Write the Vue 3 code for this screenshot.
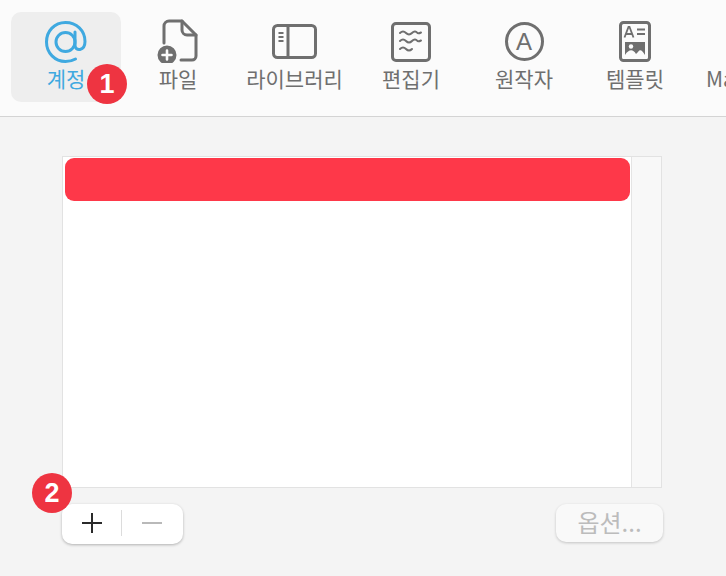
<template>
  <div class="prefs">
    <div class="toolbar">
      <div class="tab tab--active">
        <svg class="tab-icon" viewBox="0 0 60 44" fill="none" stroke="#3fa9e0" stroke-width="3" stroke-linecap="round">
          <circle cx="29.5" cy="23" r="9.500" />
          <path d="M39 13v13c0 7 10 6 10-3.500C49 11.500 40.500 3.500 29.500 3.500S10.500 12 10.500 23 19 42.500 29.500 42.500c4 0 7-.8 10-2.500" />
        </svg>
        <span class="tab-label">계정</span>
      </div>
      <div class="tab">
        <svg class="tab-icon" viewBox="0 0 60 44" fill="none" stroke="#6f6f6f" stroke-width="3" stroke-linejoin="round" stroke-linecap="round">
          <path d="M16 24V7a5 5 0 0 1 5-5h13l14 14v21a4 4 0 0 1-4 4H33" />
          <path d="M34 2v9a5 5 0 0 0 5 5h9" />
          <circle cx="19" cy="36" r="8" fill="#6f6f6f" stroke="#6f6f6f" />
          <path d="M14.500 36h9M19 31.500v9" stroke="#fbfbfb" stroke-width="2.600" />
        </svg>
        <span class="tab-label">파일</span>
      </div>
      <div class="tab">
        <svg class="tab-icon" viewBox="0 0 60 44" fill="none" stroke="#6f6f6f" stroke-width="3">
          <rect x="8.500" y="6.500" width="42" height="32" rx="4" />
          <path d="M23 6.500v32" />
          <path d="M13.500 14h5M13.500 18h5M13.500 22h5" stroke-width="2" />
        </svg>
        <span class="tab-label">라이브러리</span>
      </div>
      <div class="tab">
        <svg class="tab-icon" viewBox="0 0 60 44" fill="none" stroke="#6f6f6f" stroke-width="3" stroke-linecap="round">
          <rect x="11.500" y="4.500" width="37" height="37" rx="3.500" />
          <path d="M19 14c2-2 4-2 6 0s4 2 6 0 4-2 5-.5 2 1 4 0M19 22c2-2 4-2 6 0s4 2 6 0 4-2 5-.5 2 1 4 0M19 30c2-2 4-2 6 0s4 2 6 0" stroke-width="2" />
        </svg>
        <span class="tab-label">편집기</span>
      </div>
      <div class="tab">
        <div class="author-icon">A</div>
        <span class="tab-label">원작자</span>
      </div>
      <div class="tab">
        <svg class="tab-icon" viewBox="0 0 60 44" fill="none" stroke="#6f6f6f" stroke-width="3">
          <rect x="15.500" y="3.500" width="29" height="38" rx="3" />
          <path d="M19.500 18.500l4-10.500h1l4 10.500M21 15h6" stroke-width="1.800" />
          <path d="M32 10.500h8M32 15h8" stroke-width="2" />
          <path d="M20 23h20v13c-3-5-5-6-7-3l-2 2c-3-5-7-5-11 1z" fill="#6f6f6f" stroke="none" />
          <circle cx="26" cy="27.500" r="2.200" fill="#fbfbfb" stroke="none" />
        </svg>
        <span class="tab-label">템플릿</span>
      </div>
      <div class="tab tab--cut">
        <span class="tab-label">Mail</span>
      </div>
    </div>

    <div class="content">
      <div class="list">
        <div class="list-main">
          <div class="account-row"></div>
        </div>
        <div class="list-scroll"></div>
      </div>
      <div class="footer">
        <div class="add-remove">
          <button type="button" class="icon-btn">
            <svg viewBox="0 0 24 24" width="24" height="24" stroke="#2a2a2a" stroke-width="2" fill="none"><path d="M2 12h20M12 2v20" /></svg>
          </button>
          <span class="divider"></span>
          <button type="button" class="icon-btn">
            <svg viewBox="0 0 24 24" width="24" height="24" stroke="#b9b9b9" stroke-width="2" fill="none"><path d="M2 12h20" /></svg>
          </button>
        </div>
        <button type="button" class="options">옵션...</button>
      </div>
    </div>

    <span class="badge badge--one">1</span>
    <span class="badge badge--two">2</span>
  </div>
</template>

<script setup>
</script>

<style scoped>
.prefs {
  position: relative;
  width: 726px;
  height: 576px;
  overflow: hidden;
  background: #f4f4f4;
  font-family: "Noto Sans CJK KR", "Noto Sans", sans-serif;
}

.toolbar {
  display: grid;
  grid-template-columns: 110px 114px 119px 114px 112px 110px 60px;
  box-sizing: border-box;
  height: 117px;
  padding: 12px 0 0 11px;
  background: #fbfbfb;
  border-bottom: 1px solid #d4d4d4;
  overflow: hidden;
}

.tab {
  display: flex;
  flex-direction: column;
  align-items: center;
  height: 90px;
  padding-top: 7px;
  box-sizing: border-box;
  border-radius: 10px;
  color: #6f6f6f;
}

.tab--active {
  background: #eeeeee;
  color: #3fa9e0;
}

.tab--cut {
  align-items: flex-start;
  padding: 52px 0 0 16px;
}

.tab-icon {
  display: block;
  flex: none;
  width: 60px;
  height: 44px;
}

.author-icon {
  flex: none;
  box-sizing: border-box;
  width: 39px;
  height: 39px;
  margin: 3px 0 2px;
  border: 3px solid #6f6f6f;
  border-radius: 50%;
  font-family: "Liberation Sans", sans-serif;
  font-size: 24px;
  line-height: 33px;
  text-align: center;
  color: #6f6f6f;
}

.tab-label {
  margin-top: 1px;
  font-size: 21px;
  line-height: 29px;
  white-space: nowrap;
}

.tab--cut .tab-label {
  margin-top: 0;
}

.content {
  box-sizing: border-box;
  width: 663px;
  padding: 39px 0 0 62px;
}

.list {
  display: flex;
  box-sizing: border-box;
  width: 600px;
  height: 332px;
  background: #fff;
  border: 1px solid #e2e2e2;
}

.list-main {
  flex: 1;
  padding: 1px 1px 0 2px;
}

.account-row {
  height: 43px;
  border-radius: 9px;
  background: #fe3849;
}

.list-scroll {
  width: 29px;
  background: #f8f8f8;
  border-left: 1px solid #e4e4e4;
}

.footer {
  display: flex;
  align-items: flex-start;
  justify-content: space-between;
  margin-top: 16px;
}

.add-remove {
  display: flex;
  align-items: center;
  box-sizing: border-box;
  height: 40px;
  width: 121px;
  padding: 0 2px 2px 0;
  background: #fff;
  border-radius: 10px;
  box-shadow: 0 1px 3px rgba(0, 0, 0, 0.28);
}

.icon-btn {
  display: flex;
  align-items: center;
  justify-content: center;
  flex: 1;
  height: 100%;
  padding: 0;
  border: none;
  background: transparent;
}

.divider {
  width: 1px;
  height: 26px;
  background: #dcdcdc;
}

.options {
  width: 107px;
  height: 38px;
  padding: 0 0 3px;
  border: none;
  border-radius: 10px;
  background: #f9f9f9;
  box-shadow: 0 1px 3px rgba(0, 0, 0, 0.2);
  font-family: inherit;
  font-size: 24px;
  line-height: 35px;
  color: #bcbcbc;
}

.badge {
  position: absolute;
  width: 40px;
  height: 40px;
  border-radius: 50%;
  background: #ee3441;
  color: #fff;
  font-family: "Liberation Sans", sans-serif;
  font-size: 27px;
  font-weight: 700;
  line-height: 40px;
  text-align: center;
}

.badge--one {
  left: 87px;
  top: 64px;
}

.badge--two {
  left: 32px;
  top: 473px;
}
</style>

<style>
body {
  background: #f4f4f4;
  overflow: hidden;
}
</style>
